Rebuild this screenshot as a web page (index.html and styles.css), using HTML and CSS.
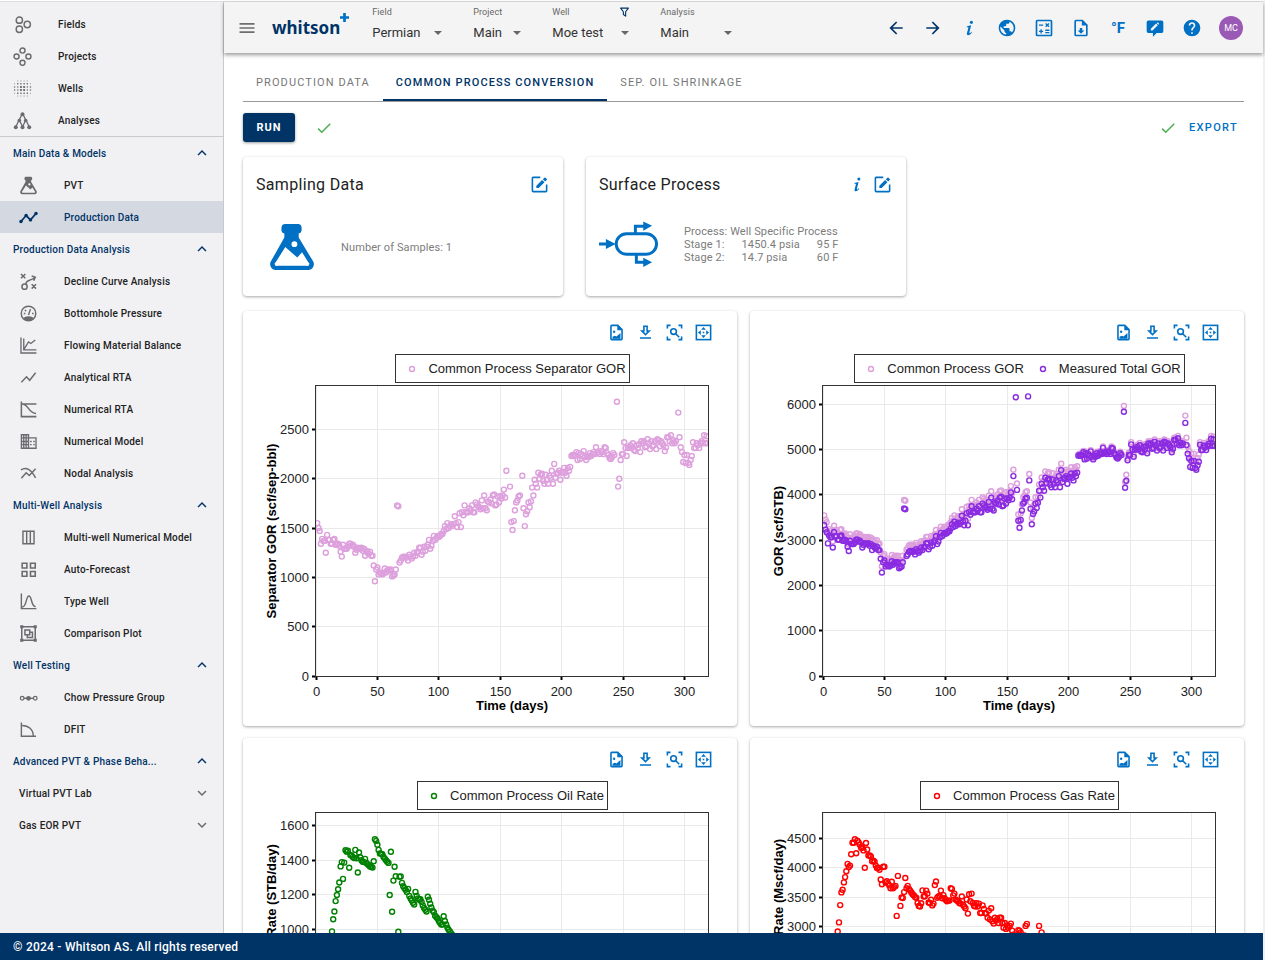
FILE: index.html
```html
<!DOCTYPE html>
<html lang="en">
<head>
    <meta charset="UTF-8">
    <meta name="viewport" content="width=device-width, initial-scale=1">
    <title>whitson+ | Common Process Conversion</title>
    <link rel="stylesheet" href="styles.css">
</head>
<body>
    <!-- icon sprite -->
    <svg class="sprite" aria-hidden="true">
        <symbol id="i-menu" viewBox="0 0 24 24"><path d="M3,6H21V8H3V6M3,11H21V13H3V11M3,16H21V18H3V16Z"/></symbol>
        <symbol id="i-left" viewBox="0 0 24 24"><path d="M20,11V13H8L13.5,18.5L12.08,19.92L4.16,12L12.08,4.08L13.5,5.5L8,11H20Z"/></symbol>
        <symbol id="i-right" viewBox="0 0 24 24"><path d="M4,11V13H16L10.5,18.5L11.92,19.92L19.84,12L11.92,4.08L10.5,5.5L16,11H4Z"/></symbol>
        <symbol id="i-earth" viewBox="0 0 24 24"><path d="M17.9,17.39C17.64,16.59 16.89,16 16,16H15V13A1,1 0 0,0 14,12H8V10H10A1,1 0 0,0 11,9V7H13A2,2 0 0,0 15,5V4.59C17.93,5.77 20,8.64 20,12C20,14.08 19.2,15.97 17.9,17.39M11,19.93C7.05,19.44 4,16.08 4,12C4,11.38 4.08,10.78 4.21,10.21L9,15V16A2,2 0 0,0 11,18M12,2A10,10 0 0,0 2,12A10,10 0 0,0 12,22A10,10 0 0,0 22,12A10,10 0 0,0 12,2Z"/></symbol>
        <symbol id="i-calc" viewBox="0 0 24 24"><g fill="none" stroke="currentColor" stroke-width="2"><rect x="3" y="3" width="18" height="18" rx="1"/><path stroke-width="1.6" d="M6 8.5H11M14 6.5L18 10.5M18 6.5L14 10.5M6 16H11M8.5 13.5V18.5M13.5 14.7H18.5M13.5 17.5H18.5"/></g></symbol>
        <symbol id="i-filedown" viewBox="0 0 24 24"><path d="M14,2H6A2,2 0 0,0 4,4V20A2,2 0 0,0 6,22H18A2,2 0 0,0 20,20V8L14,2M18,20H6V4H13V9H18V20M12,19L8,15H10.5V12H13.5V15H16L12,19Z"/></symbol>
        <symbol id="i-comment" viewBox="0 0 24 24"><path fill-rule="evenodd" d="M4,3H20A2,2 0 0,1 22,5V16A2,2 0 0,1 20,18H14L9.5,22.5V18H4A2,2 0 0,1 2,16V5A2,2 0 0,1 4,3M7,15H9L15.3,8.7L13.3,6.7L7,13V15M16,8L17,7L15,5L14,6Z"/></symbol>
        <symbol id="i-help" viewBox="0 0 24 24"><path d="M15.07,11.25L14.17,12.17C13.45,12.89 13,13.5 13,15H11V14.5C11,13.39 11.45,12.39 12.17,11.67L13.41,10.41C13.78,10.05 14,9.55 14,9C14,7.89 13.1,7 12,7A2,2 0 0,0 10,9H8A4,4 0 0,1 12,5A4,4 0 0,1 16,9C16,9.88 15.64,10.67 15.07,11.25M13,19H11V17H13M12,2A10,10 0 0,0 2,12A10,10 0 0,0 12,22A10,10 0 0,0 22,12C22,6.47 17.5,2 12,2Z"/></symbol>
        <symbol id="i-filter" viewBox="0 0 24 24"><path fill="none" stroke="currentColor" stroke-width="2.4" stroke-linejoin="round" d="M3.5 3.5H20.5L14.5 11.5V21L9.5 17.5V11.5Z"/></symbol>
        <symbol id="i-check" viewBox="0 0 24 24"><path d="M21,7L9,19L3.5,13.5L4.91,12.09L9,16.17L19.59,5.59L21,7Z"/></symbol>
        <symbol id="i-up" viewBox="0 0 24 24"><path d="M7.41,15.41L12,10.83L16.59,15.41L18,14L12,8L6,14L7.41,15.41Z"/></symbol>
        <symbol id="i-down" viewBox="0 0 24 24"><path d="M7.41,8.58L12,13.17L16.59,8.58L18,10L12,16L6,10L7.41,8.58Z"/></symbol>
        <symbol id="i-info" viewBox="0 0 24 24"><circle cx="13.7" cy="5.2" r="1.9"/><path d="M8.2 10.2C9.6 9.4 11.6 8.9 13.4 8.7L11.3 17.2C11.1 18.2 11.3 18.5 11.8 18.3C12.4 18.1 13 17.4 13.6 16.6L14.3 17.1C13 19.4 11.3 20.6 9.7 20.6C8.4 20.6 8 19.6 8.4 18L10 11.7C10.1 11.1 9.7 10.9 8 11Z"/></symbol>
        <symbol id="i-edit" viewBox="0 0 24 24"><path fill="none" stroke="currentColor" stroke-width="2" d="M13 3H4A1 1 0 0 0 3 4V20A1 1 0 0 0 4 21H20A1 1 0 0 0 21 20V12"/><path d="M8 13.5V16.5H11L18.3 9.2L15.3 6.2ZM16.2 5.3L19.2 8.3L21.2 6.3A1 1 0 0 0 21.2 5L19.6 3.4A1 1 0 0 0 18.2 3.4Z"/></symbol>
        <symbol id="i-fileimg" viewBox="0 0 24 24"><path fill-rule="evenodd" d="M14,2H6A2,2 0 0,0 4,4V20A2,2 0 0,0 6,22H18A2,2 0 0,0 20,20V8L14,2M18,20H6V4H13V9H18V20Z"/><path d="M7 20V17.5L10 16L12 17L17 12.5V20Z"/><circle cx="9" cy="11" r="1.5"/></symbol>
        <symbol id="i-download" viewBox="0 0 24 24"><path d="M13,5V11H14.17L12,13.17L9.83,11H11V5H13M15,3H9V9H5L12,16L19,9H15V3M19,18H5V20H19V18Z"/></symbol>
        <symbol id="i-zoom" viewBox="0 0 24 24"><g fill="none" stroke="currentColor" stroke-width="2"><path d="M3 7V3H7M17 3H21V7M21 17V21H17M7 21H3V17M13.5 13.5L18 18"/><circle cx="10.8" cy="10.8" r="3.6"/></g></symbol>
        <symbol id="i-fit" viewBox="0 0 24 24"><rect x="3" y="3" width="18" height="18" fill="none" stroke="currentColor" stroke-width="2"/><path d="M12 5L15 8.6H9ZM12 19L15 15.4H9ZM5 12L8.6 9V15ZM19 12L15.4 9V15ZM11 11H13V13H11Z"/></symbol>
        <symbol id="i-fields" viewBox="0 0 24 24"><g fill="none" stroke="currentColor" stroke-width="1.8"><circle cx="8" cy="6.5" r="4"/><circle cx="18" cy="12" r="4"/><circle cx="8" cy="18" r="4"/></g></symbol>
        <symbol id="i-projects" viewBox="0 0 24 24"><g fill="none" stroke="currentColor" stroke-width="1.8"><circle cx="12" cy="4.5" r="3.2"/><circle cx="4.5" cy="12" r="3.2"/><circle cx="19.5" cy="12" r="3.2"/><circle cx="12" cy="20" r="3.2"/></g></symbol>
        <symbol id="i-wells" viewBox="0 0 24 24"><g fill="none" stroke="currentColor" stroke-linecap="round"><path stroke-width="2.6" stroke-dasharray=".1 3.9" d="M10 10H18M10 14H18"/><path stroke-width="1.8" stroke-dasharray=".1 3.9" d="M2 10H23M2 14H23M6 6H20M6 18H20"/><path stroke-width="1" stroke-dasharray=".1 3.9" d="M2 6H23M2 18H23M6 2.5H20M6 21.5H20"/></g></symbol>
        <symbol id="i-analyses" viewBox="0 0 24 24"><g fill="none" stroke="currentColor" stroke-width="1.6"><path d="M12 3L3.5 20M12 3L20.5 20M8 11.5L12.2 20M16 11.5L12.2 20"/></g><circle cx="12" cy="4" r="2.5"/><circle cx="8" cy="12" r="2.3"/><circle cx="16" cy="12" r="2.3"/><circle cx="3.5" cy="20.5" r="2.5"/><circle cx="12" cy="20.5" r="2.5"/><circle cx="20.5" cy="20.5" r="2.5"/></symbol>
        <symbol id="i-flask" viewBox="0 0 48 52"><path fill-rule="evenodd" d="M17 2H31A4 4 0 0 1 34 6V9A4 4 0 0 1 31 12V16L46 41A6 6 0 0 1 41 50H7A6 6 0 0 1 2 41L16 16V12A4 4 0 0 1 13 9V6A4 4 0 0 1 17 2M17 26L7 42A2 2 0 0 0 9 45.5H39A2 2 0 0 0 41 42L34.5 31.5L29.5 37Z"/><circle cx="26.5" cy="23" r="3" fill="#fff"/></symbol>
        <symbol id="i-prod" viewBox="0 0 24 24"><path fill="none" stroke="currentColor" stroke-width="2.2" d="M2.5 17L9 9.5L14.5 15L21.5 7"/><circle cx="2.5" cy="17" r="2.2"/><circle cx="9" cy="9.5" r="2.2"/><circle cx="14.5" cy="15" r="2.2"/><circle cx="21.5" cy="7" r="2.2"/></symbol>
        <symbol id="i-decline" viewBox="0 0 24 24"><g fill="none" stroke="currentColor" stroke-width="1.9"><path d="M2.5 2.5L8 8M8 2.5L2.5 8M16 15.5L21.5 21M21.5 15.5L16 21M8.5 15.5C9 9 14 12 20 7M16 5L20.5 6.5L18.5 11"/><circle cx="7" cy="18.5" r="3.3"/></g></symbol>
        <symbol id="i-gauge" viewBox="0 0 24 24"><g fill="none" stroke="currentColor"><circle cx="12" cy="12" r="9.2" stroke-width="1.8"/><path stroke-width="1.8" d="M12 14L14.5 6.5M6 12H8M16.5 12H18.5M7.5 7.5L9 9"/></g><path d="M5 18.5C8 14.5 16 14.5 19 18.5C15 22 9 22 5 18.5Z"/></symbol>
        <symbol id="i-fmb" viewBox="0 0 24 24"><path fill="none" stroke="currentColor" stroke-width="1.7" d="M2.5 2V21.5H22M6 3V17.5H22M6.5 16.5L12 7.5L15 9.5L20.5 5"/></symbol>
        <symbol id="i-line" viewBox="0 0 24 24"><path fill="none" stroke="currentColor" stroke-width="1.8" d="M3 18L9.5 11L13.5 15.5L21 6"/></symbol>
        <symbol id="i-nrta" viewBox="0 0 24 24"><path fill="none" stroke="currentColor" stroke-width="1.9" d="M3 2V21H22M3 5H22M4 5C12 5 12 17 21.5 17"/></symbol>
        <symbol id="i-model" viewBox="0 0 24 24"><path fill="none" stroke="currentColor" stroke-width="1.7" d="M3 3.5H12V20.5H3ZM6 3.5V20.5M9 3.5V20.5M3 7.5H12M3 12H12M3 16H12M12 7.5H21.5V20.5H12M14 12H16M18 12H20M14 16H16M18 16H20"/></symbol>
        <symbol id="i-nodal" viewBox="0 0 24 24"><path fill="none" stroke="currentColor" stroke-width="1.8" d="M2.5 7.5C9 3.5 15 6 21 17.5M3 18L9 11L13 14.5L21 6"/></symbol>
        <symbol id="i-cols" viewBox="0 0 24 24"><path fill="none" stroke="currentColor" stroke-width="1.8" d="M5 4H19V20H5ZM9.7 4V20M14.3 4V20"/></symbol>
        <symbol id="i-grid" viewBox="0 0 24 24"><path fill="none" stroke="currentColor" stroke-width="2" d="M4 4H10V10H4ZM14.5 4H20.5V10H14.5ZM4 14.5H10V20.5H4ZM14.5 14.5H20.5V20.5H14.5Z"/></symbol>
        <symbol id="i-bell" viewBox="0 0 24 24"><path fill="none" stroke="currentColor" stroke-width="1.8" d="M3 2V21H22M4 19C10 19 8.5 5 12.5 5S15 18.5 21 18.5"/></symbol>
        <symbol id="i-compare" viewBox="0 0 24 24"><path fill="none" stroke="currentColor" stroke-width="1.9" d="M3.5 3.5H20.5V20.5H3.5ZM7.5 7.5H13.5V13.5H7.5ZM13.5 10.5H17V17H10.5V13.5"/><path d="M1.5 1.5H5.5V5.5H1.5ZM18.5 1.5H22.5V5.5H18.5ZM1.5 18.5H5.5V22.5H1.5ZM18.5 18.5H22.5V22.5H18.5Z"/></symbol>
        <symbol id="i-chow" viewBox="0 0 24 24"><path fill="none" stroke="currentColor" stroke-width="1.8" d="M6 13H18"/><g fill="none" stroke="currentColor" stroke-width="1.6"><circle cx="4" cy="13" r="2.3"/><circle cx="20.5" cy="13" r="2.3"/></g><circle cx="12" cy="13" r="3"/></symbol>
        <symbol id="i-dfit" viewBox="0 0 24 24"><path fill="none" stroke="currentColor" stroke-width="1.8" d="M3 3V20.5H21.5M4 7C12 7 18 12 18 20"/></symbol>
        <symbol id="i-separator" viewBox="0 0 60 48"><g fill="none" stroke="currentColor" stroke-width="3"><rect x="17.5" y="13.5" width="41" height="21" rx="10.5"/><path d="M0 24H10M37 13V6H46M38 35V42.5H46"/></g><path d="M7 19L17 24L7 29ZM45 1L54 5.5L45 10.5ZM45 38L54 42.5L45 47.5Z"/></symbol>
        <symbol id="i-plus" viewBox="0 0 10 10"><path d="M3.5 0H6.5V3.5H10V6.5H6.5V10H3.5V6.5H0V3.5H3.5Z"/></symbol>
    </svg>

    <div class="app">
        <div class="layout">
            <nav class="sidebar">
                <a class="nav-top" href="#"><svg><use href="#i-fields"/></svg>Fields</a>
                <a class="nav-top" href="#"><svg><use href="#i-projects"/></svg>Projects</a>
                <a class="nav-top" href="#"><svg><use href="#i-wells"/></svg>Wells</a>
                <a class="nav-top" href="#"><svg><use href="#i-analyses"/></svg>Analyses</a>
                <hr>
                <button class="nav-group"><span>Main Data &amp; Models</span><svg><use href="#i-up"/></svg></button>
                <a class="nav-item" href="#"><svg><use href="#i-flask"/></svg>PVT</a>
                <a class="nav-item active" href="#"><svg><use href="#i-prod"/></svg>Production Data</a>
                <button class="nav-group"><span>Production Data Analysis</span><svg><use href="#i-up"/></svg></button>
                <a class="nav-item" href="#"><svg><use href="#i-decline"/></svg>Decline Curve Analysis</a>
                <a class="nav-item" href="#"><svg><use href="#i-gauge"/></svg>Bottomhole Pressure</a>
                <a class="nav-item" href="#"><svg><use href="#i-fmb"/></svg>Flowing Material Balance</a>
                <a class="nav-item" href="#"><svg><use href="#i-line"/></svg>Analytical RTA</a>
                <a class="nav-item" href="#"><svg><use href="#i-nrta"/></svg>Numerical RTA</a>
                <a class="nav-item" href="#"><svg><use href="#i-model"/></svg>Numerical Model</a>
                <a class="nav-item" href="#"><svg><use href="#i-nodal"/></svg>Nodal Analysis</a>
                <button class="nav-group"><span>Multi-Well Analysis</span><svg><use href="#i-up"/></svg></button>
                <a class="nav-item" href="#"><svg><use href="#i-cols"/></svg>Multi-well Numerical Model</a>
                <a class="nav-item" href="#"><svg><use href="#i-grid"/></svg>Auto-Forecast</a>
                <a class="nav-item" href="#"><svg><use href="#i-bell"/></svg>Type Well</a>
                <a class="nav-item" href="#"><svg><use href="#i-compare"/></svg>Comparison Plot</a>
                <button class="nav-group"><span>Well Testing</span><svg><use href="#i-up"/></svg></button>
                <a class="nav-item" href="#"><svg><use href="#i-chow"/></svg>Chow Pressure Group</a>
                <a class="nav-item" href="#"><svg><use href="#i-dfit"/></svg>DFIT</a>
                <button class="nav-group"><span>Advanced PVT &amp; Phase Beha...</span><svg><use href="#i-up"/></svg></button>
                <button class="nav-group nested"><span>Virtual PVT Lab</span><svg><use href="#i-down"/></svg></button>
                <button class="nav-group nested"><span>Gas EOR PVT</span><svg><use href="#i-down"/></svg></button>
            </nav>

            <div class="page">
                <header class="topbar">
                    <button class="icon-btn menu" aria-label="Menu"><svg><use href="#i-menu"/></svg></button>
                    <a class="logo" href="#">whitson<svg><use href="#i-plus"/></svg></a>
                    <div class="pickers">
                        <div class="picker field">
                            <label for="field">Field</label>
                            <div class="select"><select id="field"><option>Permian</option></select></div>
                        </div>
                        <div class="picker project">
                            <label for="project">Project</label>
                            <div class="select"><select id="project"><option>Main</option></select></div>
                        </div>
                        <div class="picker well">
                            <label for="well">Well <svg><use href="#i-filter"/></svg></label>
                            <div class="select"><select id="well"><option>Moe test</option></select></div>
                        </div>
                        <div class="picker analysis">
                            <label for="analysis">Analysis</label>
                            <div class="select"><select id="analysis"><option>Main</option></select></div>
                        </div>
                    </div>
                    <div class="tools">
                        <button class="icon-btn dark" aria-label="Back"><svg><use href="#i-left"/></svg></button>
                        <button class="icon-btn dark" aria-label="Forward"><svg><use href="#i-right"/></svg></button>
                        <button class="icon-btn" aria-label="Info"><svg><use href="#i-info"/></svg></button>
                        <button class="icon-btn" aria-label="Language"><svg><use href="#i-earth"/></svg></button>
                        <button class="icon-btn" aria-label="Calculator"><svg><use href="#i-calc"/></svg></button>
                        <button class="icon-btn" aria-label="Download file"><svg><use href="#i-filedown"/></svg></button>
                        <button class="icon-btn unit">°F</button>
                        <button class="icon-btn" aria-label="Feedback"><svg><use href="#i-comment"/></svg></button>
                        <button class="icon-btn" aria-label="Help"><svg><use href="#i-help"/></svg></button>
                        <button class="avatar">MC</button>
                    </div>
                </header>

                <main class="content">
                    <div class="tabs">
                        <a href="#">Production Data</a>
                        <a href="#" class="active">Common Process Conversion</a>
                        <a href="#">Sep. Oil Shrinkage</a>
                    </div>

                    <div class="actions">
                        <button class="run">Run</button>
                        <svg class="ok"><use href="#i-check"/></svg>
                        <button class="export"><svg class="ok"><use href="#i-check"/></svg>Export</button>
                    </div>

                    <div class="info-cards">
                        <section class="card info">
                            <div class="info-head">
                                <h2>Sampling Data</h2>
                                <button class="icon-btn" aria-label="Edit"><svg><use href="#i-edit"/></svg></button>
                            </div>
                            <div class="info-body">
                                <svg class="flask"><use href="#i-flask"/></svg>
                                <p>Number of Samples: 1</p>
                            </div>
                        </section>
                        <section class="card info">
                            <div class="info-head">
                                <h2>Surface Process</h2>
                                <button class="icon-btn" aria-label="Info"><svg><use href="#i-info"/></svg></button>
                                <button class="icon-btn" aria-label="Edit"><svg><use href="#i-edit"/></svg></button>
                            </div>
                            <div class="info-body process">
                                <svg class="separator"><use href="#i-separator"/></svg>
                                <table>
                                    <tr><td colspan="3">Process: Well Specific Process</td></tr>
                                    <tr><td>Stage 1:</td><td>1450.4 psia</td><td>95 F</td></tr>
                                    <tr><td>Stage 2:</td><td>14.7 psia</td><td>60 F</td></tr>
                                </table>
                            </div>
                        </section>
                    </div>

                    <div class="charts" id="charts"></div>
                </main>
            </div>
        </div>
        <footer>© 2024 - Whitson AS. All rights reserved</footer>
    </div>

    <script src="script.js"></script>
</body>
</html>
```

FILE: styles.css
```css
* { box-sizing: border-box; }
body {
    margin: 0;
    font-family: Roboto, "Liberation Sans", sans-serif;
    color: #222;
    background: #fff;
}
a { color: inherit; text-decoration: none; }
button {
    font-family: inherit;
    border: none;
    background: none;
    padding: 0;
    cursor: pointer;
}
svg { fill: currentColor; flex: none; }
.sprite { display: none; }

.app {
    height: 100vh;
    display: flex;
    flex-direction: column;
    padding-top: 1px;
    border-right: 2px solid #f1f1f1;
}
.layout {
    flex: 1;
    min-height: 0;
    display: flex;
    border-top: 1px solid #dedede;
}

/* sidebar */
.sidebar {
    width: 224px;
    flex: none;
    padding-top: 6px;
    background: #f1f1f4;
    border-right: 1px solid #c9c9cc;
    overflow: hidden;
    font-size: 10px;
    font-weight: 500;
    letter-spacing: .02em;
}
.sidebar hr {
    margin: 0;
    border: none;
    border-top: 1px solid #cbcbce;
}
.nav-top, .nav-item, .nav-group {
    display: flex;
    align-items: center;
    height: 32px;
    color: #222;
}
.nav-top svg, .nav-item svg {
    width: 19px;
    height: 19px;
    color: #6b6b6e;
}
.nav-top { padding-left: 13px; gap: 26px; }
.nav-item { padding-left: 19px; gap: 26px; }
.nav-item.active { background: #d4d8e1; color: #003366; }
.nav-item.active svg { color: #003366; }
.nav-group {
    width: 100%;
    justify-content: space-between;
    padding: 0 12px 0 13px;
    font-size: inherit;
    font-weight: inherit;
    letter-spacing: inherit;
    color: #003366;
}
.nav-group svg { width: 18px; height: 18px; }
.nav-group.nested { padding-left: 19px; color: #222; }
.nav-group.nested svg { color: #6b6b6e; }

/* top bar */
.page {
    flex: 1;
    min-width: 0;
    display: flex;
    flex-direction: column;
}
.topbar {
    flex: none;
    height: 51px;
    display: flex;
    align-items: center;
    padding: 0 20px 0 13px;
    background: #f4f4f4;
    box-shadow: 0 2px 4px rgba(0,0,0,0.4);
    z-index: 1;
}
.icon-btn { height: 20px; color: #0070c4; }
.icon-btn svg { display: block; width: 20px; height: 20px; }
.icon-btn.dark { color: #003366; }
.icon-btn.menu { color: #6e6e6e; }
.logo {
    display: flex;
    margin-left: 15px;
    color: #003366;
    font-family: "Noto Sans", sans-serif;
    font-size: 17px;
    font-weight: 700;
    line-height: 26px;
}
.logo svg { width: 9px; height: 9px; margin-top: -2px; color: #0070c4; }
.pickers { display: flex; gap: 30px; margin: 0 0 6px 23px; }
.picker label {
    display: flex;
    justify-content: space-between;
    align-items: center;
    height: 15px;
    font-size: 9px;
    color: #666;
    letter-spacing: .01em;
}
.picker label svg { width: 11px; height: 12px; color: #003366; }
.select { position: relative; }
.select select {
    appearance: none;
    width: 100%;
    height: 26px;
    padding: 0;
    border: none;
    background: none;
    font-family: inherit;
    font-size: 13px;
    color: #333;
}
.select::after {
    content: "";
    position: absolute;
    right: 1px;
    top: 12px;
    border: 4px solid transparent;
    border-top-color: #666;
    border-bottom: none;
    pointer-events: none;
}
.field { width: 71px; }
.project { width: 49px; }
.well { width: 78px; }
.analysis { width: 73px; }
.tools {
    display: flex;
    align-items: center;
    gap: 17px;
    margin-left: auto;
}
.unit { width: 20px; font-size: 15px; font-weight: 700; }
.avatar {
    width: 24px;
    height: 24px;
    border-radius: 50%;
    background: #9b59b6;
    color: #fff;
    font-size: 9px;
}

/* content */
.content {
    flex: 1;
    min-height: 0;
    overflow-y: auto;
    scrollbar-width: none;
    padding: 9px 19px 40px;
}
.tabs {
    display: flex;
    height: 40px;
    border-bottom: 1px solid #999;
    font-size: 11px;
    text-transform: uppercase;
    letter-spacing: .1em;
    color: #777;
}
.tabs a { padding: 0 13px; line-height: 41px; }
.tabs .active {
    color: #003366;
    font-weight: 500;
    border-bottom: 2px solid #003366;
}
.actions {
    display: flex;
    align-items: center;
    margin-top: 11px;
}
.ok { width: 18px; height: 18px; color: #4caf50; }
.run {
    width: 52px;
    height: 29px;
    margin-right: 20px;
    border-radius: 3px;
    background: #003366;
    color: #fff;
    font-size: 11px;
    font-weight: 700;
    letter-spacing: .09em;
    text-transform: uppercase;
    box-shadow: 0 1px 3px rgba(0,0,0,0.4);
}
.export {
    display: flex;
    align-items: center;
    gap: 12px;
    margin-left: auto;
    padding-right: 6px;
    color: #0070c4;
    font-size: 11px;
    font-weight: 500;
    letter-spacing: .12em;
    text-transform: uppercase;
}
.card {
    background: #fff;
    border-radius: 4px;
    box-shadow: 0 1px 3px rgba(0,0,0,0.35);
}
.info-cards {
    display: flex;
    gap: 23px;
    margin: 15px 0;
}
.info { width: 320px; height: 139px; padding: 0 13px; }
.info-head {
    display: flex;
    align-items: center;
    gap: 4px;
    height: 54px;
}
.info-head h2 {
    flex: 1;
    margin: 0;
    font-size: 16px;
    font-weight: 400;
    letter-spacing: .02em;
}
.info-head svg { width: 19px; height: 19px; margin: 0 1px; }
.info-body {
    display: flex;
    align-items: center;
    gap: 26px;
    height: 72px;
    padding-left: 13px;
    color: #7c7c7c;
    font-size: 11px;
    letter-spacing: .01em;
}
.info-body.process { padding-left: 0; height: 66px; }
.info-body svg { color: #0070c4; }
.flask { width: 46px; height: 50px; }
.separator { width: 59px; height: 48px; }
.info-body table { border-collapse: collapse; line-height: 13px; }
.info-body td { padding: 0 17px 0 0; white-space: nowrap; }
.info-body td:last-child { padding-right: 0; }

/* charts */
.charts {
    display: grid;
    grid-template-columns: 1fr 1fr;
    gap: 12px 13px;
}
.chart { min-width: 0; height: 415px; }
.chart-tools {
    display: flex;
    justify-content: flex-end;
    gap: 10px;
    height: 43px;
    padding: 11px 24px 0 0;
}
.chart-tools svg { width: 19px; height: 19px; }
.legend-row {
    display: flex;
    justify-content: center;
    padding: 0 28px 0 73px;
}
.legend {
    display: flex;
    gap: 3px;
    height: 29px;
    padding-right: 3px;
    border: 1px solid #333;
    font-size: 13px;
    line-height: 27px;
    white-space: nowrap;
    font-family: "Liberation Sans", sans-serif;
}
.legend span { display: flex; align-items: center; }
.legend svg { width: 32px; height: 12px; }
.plot { display: block; width: 100%; height: 343px; font-family: "Liberation Sans", sans-serif; }
.plot text { font-size: 13px; fill: #222; }
.plot .title { font-size: 13px; font-weight: 700; fill: #000; }
.plot .grid { stroke: #e9e9e9; }
.plot .tick { stroke: #000; stroke-width: 2; }
.plot .frame { fill: none; stroke: #333; }
.marker { fill: none; stroke-width: 1.4; }

footer {
    flex: none;
    height: 27px;
    padding-left: 13px;
    background: #003366;
    color: #fff;
    font-size: 12px;
    font-weight: 500;
    letter-spacing: .02em;
    line-height: 29px;
}
```

FILE: script.js
```js
// separator GOR per day (x10 scf/sep-bbl), 0 = no reading
const sepGor = [
    155,150,147,134,139,137,137,125,143,138, 138,134,134,138,139,133,133,134,132,126,
    121,133,129,129,129,131,134,134,132,133, 131,125,128,130,129,129,130,127,129,122,
    127,125,124,126,122,122,112,96,108,110, 103,105,104,103,104,109,105,107,108,107,
    108,101,102,103,108,173,172,115,117,120, 121,120,121,120,117,123,121,119,121,125,
    122,125,126,130,130,123,126,131,127,131, 133,138,129,132,137,142,138,140,142,141,
    142,144,144,147,152,149,155,150,152,154, 152,154,162,155,151,156,165,151,166,163,
    173,166,166,166,170,168,173,166,166,176, 174,172,171,169,178,170,183,170,168,177,
    176,179,175,183,184,173,174,182,176,182, 180,183,189,181,208,0,0,192,156,148,
    157,168,176,178,182,183,0,203,170,152, 164,167,176,171,177,191,183,199,195,191,
    206,200,204,205,198,195,204,199,195,203, 201,208,195,215,201,205,206,208,199,206,
    207,211,206,203,211,208,212,223,224,223, 224,227,219,226,220,225,223,228,222,219,
    223,222,226,223,225,227,225,232,226,227, 225,228,227,225,232,231,226,224,221,220,
    222,226,224,0,278,192,200,219,225,225, 237,231,223,231,232,234,231,236,229,228,
    234,231,235,227,238,236,238,232,233,240, 236,230,238,233,234,238,230,240,239,233,
    238,236,234,228,232,242,242,238,244,236, 239,236,238,0,267,242,232,227,217,224,
    216,224,216,214,219,223,237,231,231,236, 234,231,236,238,236,244,236,243,236
];

// first reading on day 13
const oilRate = [
    990,1060,1105,1165,1200,1233,1272,1365,1390,1293,1387,1458,1450,1455,1357,1430,1428,1420,
    1413,1460,1412,1330,1445,1418,1400,1392,1390,1408,1385,1378,1372,1365,1362,1358,1395,1522,
    1512,1490,1460,1440,1438,1435,1420,1410,1400,1392,1385,1200,1450,1103,1283,1363,1308,0,988,
    1305,1307,1270,1250,1240,1230,1218,1235,1195,1180,1168,1155,1145,1218,1195,1180,1172,1175,
    1160,1140,1125,1115,1105,1190,1172,1150,1128,1110,1100,1080,1072,1065,1050,1040,1030,1030,
    1077,1050,1030,1012,1000,990,980,970,960,950,940,930,920,912,905,898,890
];

// first reading on day 12
const gasRate = [
    2915,3070,3365,3580,3625,3750,3840,3940,4065,4010,4035,4230,4425,4425,4485,4245,4460,4430,
    4390,4340,4340,4295,4000,4420,4310,4210,4210,4190,4110,4120,4100,4035,3995,4000,3965,3800,
    3720,4015,4015,3750,3770,3730,3700,3650,3760,3650,3670,3690,3180,3860,0,3350,3495,3485,3585,
    3825,3650,3690,3640,3610,3580,3550,3530,3500,3490,3400,3350,3340,3395,3615,3510,3515,3610,
    3560,3410,3400,3455,3360,3390,3705,3765,3490,3510,3520,3610,3480,3535,3480,3450,3430,3440,
    3440,3650,3640,3530,3560,3460,3440,3430,3400,3390,3510,3370,3340,3310,3460,3220,3550,3430,
    3560,3400,3350,3340,3395,3340,3390,3230,3230,3360,3300,3230,3220,3150,3270,3120,3310,3090,
    3050,3150,3100,3130,3060,3150,3150,3060,2980,3060,2960,3020,2980,3010,3050,2930,2860,2840,
    2800,2850,2940,2930,2900,2830,2810,2850,3010,3045,2820,2800,2790,2830,2800,2780,2760,2790,
    2770,3010,2800,2900,2750
];

function series(values, firstDay) {
    return values.map((v, i) => [firstDay + i, v]).filter(p => p[1] > 0);
}

function totalGor(day, v) {
    return day < 208 ? 600 + 1.9 * v : 540 + 1.95 * v;
}

function measuredOffset(day) {
    if (day < 5) return 220;
    if (day === 66 || day === 67) return 190;
    if (day < 208) return 140;
    if (day < 245) return 30;
    if (day < 248) return 130;
    if (day < 294) return 50;
    return day < 307 ? 160 : 60;
}

const sep = series(sepGor.map(v => v * 10), 1);
const common = sep.map(([d, v]) => [d, totalGor(d, v)]);
const measured = common.map(([d, v]) => [d, v - measuredOffset(d)]).concat([[157, 6150], [167, 6170]]);

const charts = [
    { yTitle: 'Separator GOR (scf/sep-bbl)', max: 2940, step: 500,
      series: [{ name: 'Common Process Separator GOR', color: 'plum', data: sep }] },
    { yTitle: 'GOR (scf/STB)', max: 6400, step: 1000,
      series: [{ name: 'Common Process GOR', color: 'plum', data: common },
               { name: 'Measured Total GOR', color: 'blueviolet', data: measured }] },
    { yTitle: 'Common Process Oil Rate (STB/day)', max: 1673, step: 200,
      series: [{ name: 'Common Process Oil Rate', color: 'green', data: series(oilRate, 13) }] },
    { yTitle: 'Common Process Gas Rate (Mscf/day)', max: 4930, step: 500,
      series: [{ name: 'Common Process Gas Rate', color: 'red', data: series(gasRate, 12) }] }
];

const tools = [['fileimg', 'Save image'], ['download', 'Download'], ['zoom', 'Zoom'], ['fit', 'Fit']];
const container = document.getElementById('charts');

container.innerHTML = charts.map(c => `
    <section class="card chart">
        <div class="chart-tools">
            ${tools.map(t => `<button class="icon-btn" aria-label="${t[1]}"><svg><use href="#i-${t[0]}"/></svg></button>`).join('')}
        </div>
        <div class="legend-row"><div class="legend">
            ${c.series.map(s => `<span><svg><circle class="marker" cx="16" cy="6" r="2.5" stroke="${s.color}"/></svg>${s.name}</span>`).join('')}
        </div></div>
        <svg class="plot"></svg>
    </section>`).join('');

function draw(svg, c, n) {
    const left = 73, right = svg.clientWidth - 29, top = 3, bottom = 293;
    const x = d => left + (right - left) * d / 319.2;
    const y = v => bottom - (bottom - top) * v / c.max;
    let out = `<clipPath id="clip${n}"><rect x="${left}" y="${top}" width="${right - left}" height="${bottom - top}"/></clipPath>`;

    for (let d = 0; d <= 300; d += 50) {
        const px = Math.floor(x(d)) + 0.5;
        out += `<path class="grid" d="M${px} ${top}V${bottom}"/><path class="tick" d="M${px} ${bottom}v4"/>`;
        out += `<text x="${px}" y="${bottom + 20}" text-anchor="middle">${d}</text>`;
    }
    for (let v = 0; v <= c.max; v += c.step) {
        const py = Math.floor(y(v)) + 0.5;
        out += `<path class="grid" d="M${left} ${py}H${right}"/><path class="tick" d="M${left} ${py}h-4"/>`;
        out += `<text x="${left - 7}" y="${py + 4}" text-anchor="end">${v}</text>`;
    }
    out += `<rect class="frame" x="${left - 0.5}" y="${top - 0.5}" width="${right - left + 1}" height="${bottom - top + 1}"/>`;

    out += `<g clip-path="url(#clip${n})">`;
    for (const s of c.series) {
        for (const [d, v] of s.data) {
            out += `<circle class="marker" stroke="${s.color}" cx="${x(d).toFixed(1)}" cy="${y(v).toFixed(1)}" r="2.5"/>`;
        }
    }
    out += '</g>';

    const midY = (top + bottom) / 2;
    out += `<text class="title" x="${(left + right) / 2}" y="${bottom + 34}" text-anchor="middle">Time (days)</text>`;
    out += `<text class="title" transform="translate(33 ${midY}) rotate(-90)" text-anchor="middle">${c.yTitle}</text>`;
    svg.innerHTML = out;
}

function drawAll() {
    container.querySelectorAll('.plot').forEach((svg, i) => draw(svg, charts[i], i));
}

drawAll();
window.addEventListener('resize', drawAll);
```
